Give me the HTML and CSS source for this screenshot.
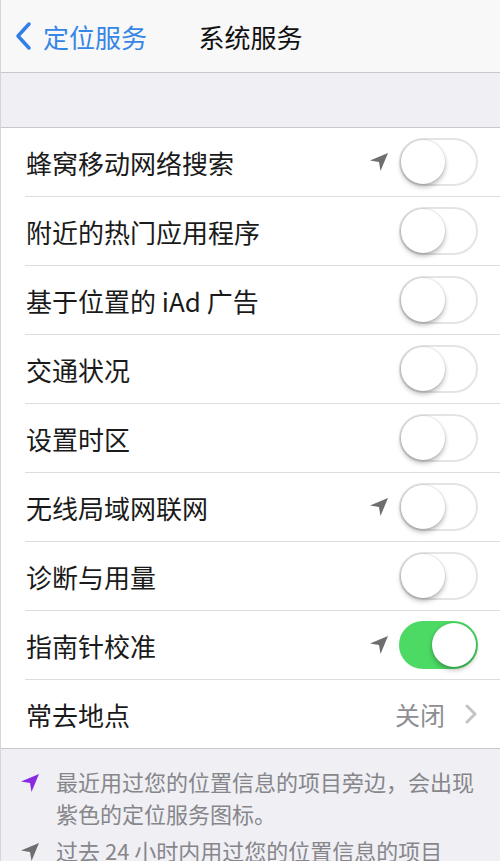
FILE: index.html
```html
<!DOCTYPE html>
<html lang="zh-CN">
<head>
  <meta charset="UTF-8" />
  <meta name="viewport" content="width=device-width, initial-scale=1.0" />
  <title>系统服务</title>
  <link rel="stylesheet" href="styles.css">
</head>
<body>
  <!-- 导航栏 -->
  <div class="navbar">
    <div class="back">
      <svg class="back-chevron" width="20" height="30" viewBox="0 0 20 30">
        <path d="M16 3 L5 15 L16 27" fill="none" stroke="#2f7fe8" stroke-width="3.5" stroke-linecap="round" stroke-linejoin="round" />
      </svg>
      <span>定位服务</span>
    </div>
    <div class="title">系统服务</div>
  </div>

  <div class="spacer"></div>

  <!-- 列表 -->
  <div class="list">
    <div class="row">
      <span class="label">蜂窝移动网络搜索</span>
      <svg class="arrow" width="20" height="20" viewBox="0 0 20 20"><path d="M19 1 L1 8.5 L10 10 L11.5 19 Z" fill="#6e6e6e" /></svg>
      <span class="switch"></span>
    </div>
    <div class="row">
      <span class="label">附近的热门应用程序</span>
      <span class="switch"></span>
    </div>
    <div class="row">
      <span class="label">基于位置的 iAd 广告</span>
      <span class="switch"></span>
    </div>
    <div class="row">
      <span class="label">交通状况</span>
      <span class="switch"></span>
    </div>
    <div class="row">
      <span class="label">设置时区</span>
      <span class="switch"></span>
    </div>
    <div class="row">
      <span class="label">无线局域网联网</span>
      <svg class="arrow" width="20" height="20" viewBox="0 0 20 20"><path d="M19 1 L1 8.5 L10 10 L11.5 19 Z" fill="#6e6e6e" /></svg>
      <span class="switch"></span>
    </div>
    <div class="row">
      <span class="label">诊断与用量</span>
      <span class="switch"></span>
    </div>
    <div class="row">
      <span class="label">指南针校准</span>
      <svg class="arrow" width="20" height="20" viewBox="0 0 20 20"><path d="M19 1 L1 8.5 L10 10 L11.5 19 Z" fill="#6e6e6e" /></svg>
      <span class="switch on"></span>
    </div>
    <div class="row">
      <span class="label">常去地点</span>
      <span class="value">关闭</span>
      <svg class="chevron" width="12" height="20" viewBox="0 0 12 20"><path d="M2 2 L10 10 L2 18" fill="none" stroke="#c4c4c8" stroke-width="3" stroke-linecap="round" stroke-linejoin="round" /></svg>
    </div>
  </div>

  <!-- 说明 -->
  <div class="footer">
    <div class="note">
      <svg class="arrow" width="20" height="20" viewBox="0 0 20 20"><path d="M19 1 L1 8.5 L10 10 L11.5 19 Z" fill="#8a2be2" /></svg>
      <p>最近用过您的位置信息的项目旁边，会出现紫色的定位服务图标。</p>
    </div>
    <div class="note">
      <svg class="arrow" width="20" height="20" viewBox="0 0 20 20"><path d="M19 1 L1 8.5 L10 10 L11.5 19 Z" fill="#6e6e6e" /></svg>
      <p>过去 24 小时内用过您的位置信息的项目<br />旁边，会出现灰色的定位服务图标。</p>
    </div>
  </div>
</body>
</html>
```

FILE: styles.css
```css
body {
  margin: 0;
  font-family: "Noto Sans CJK SC", "Noto Sans", sans-serif;
  background-color: #efeff4;
  color: #1a1a1a;
  overflow: hidden;
  border-left: 1px solid #d6d6d6;
}

.navbar {
  height: 72px;
  background-color: #f8f8f8;
  border-bottom: 1px solid #c8c7cc;
  display: flex;
  align-items: center;
  position: relative;
}

.back {
  display: flex;
  align-items: center;
  gap: 10px;
  padding-left: 12px;
  color: #3686e6;
  font-size: 26px;
}

.title {
  position: absolute;
  left: 0;
  right: 0;
  text-align: center;
  font-size: 26px;
  color: #111;
  pointer-events: none;
}

.spacer {
  height: 54px;
}

.list {
  background-color: #fff;
  border-top: 1px solid #c8c7cc;
  border-bottom: 1px solid #c8c7cc;
  padding-left: 24px;
}

.row {
  height: 68px;
  display: flex;
  align-items: center;
  padding-right: 22px;
  border-bottom: 1px solid #dddde0;
}

.row:last-child {
  border-bottom: none;
}

.label {
  flex: 1;
  font-size: 26px;
  padding-left: 1px;
}

.arrow {
  flex: none;
  margin-right: 10px;
}

.switch {
  flex: none;
  width: 75px;
  height: 44px;
  border: 2px solid #e4e4e6;
  border-radius: 24px;
  background-color: #fff;
  position: relative;
}

.switch::after {
  content: "";
  position: absolute;
  top: 0;
  left: 0;
  width: 44px;
  height: 44px;
  border-radius: 50%;
  background-color: #fff;
  box-shadow: 0 3px 5px rgba(0, 0, 0, 0.28), 0 0 0 1px rgba(0, 0, 0, 0.06);
}

.switch.on {
  background-color: #4cd964;
  border-color: #4cd964;
}

.switch.on::after {
  left: auto;
  right: 0;
}

.value {
  font-size: 25px;
  color: #8e8e93;
  margin-right: 20px;
}

.chevron {
  flex: none;
  margin-right: 1px;
}

.footer {
  padding: 16px 20px 0 19px;
}

.note {
  display: flex;
  align-items: flex-start;
  gap: 16px;
  margin-bottom: 5px;
}

.note .arrow {
  margin: 8px 0 0 0;
}

.note p {
  margin: 0;
  font-size: 22px;
  line-height: 32px;
  color: #86868b;
}
```
